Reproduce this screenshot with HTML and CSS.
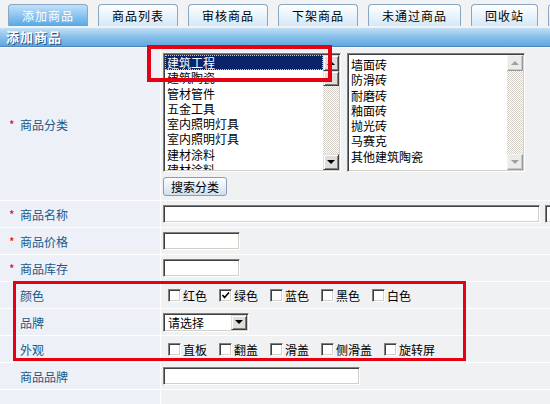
FILE: index.html
```html
<!DOCTYPE html>
<html lang="zh-CN">
<head>
    <meta charset="UTF-8">
    <meta name="viewport" content="width=device-width, initial-scale=1.0">
    <title>添加商品</title>
    <link rel="stylesheet" href="styles.css">
</head>
<body>
    <div class="tabs">
        <a href="#" class="tab active">添加商品</a>
        <a href="#" class="tab">商品列表</a>
        <a href="#" class="tab">审核商品</a>
        <a href="#" class="tab">下架商品</a>
        <a href="#" class="tab">未通过商品</a>
        <a href="#" class="tab">回收站</a>
        <span class="tab tab-edge"></span>
    </div>

    <div class="panel-title">添加商品</div>

    <table class="form">
        <colgroup>
            <col class="col-label">
            <col>
        </colgroup>
        <tr class="row-category">
            <td class="label"><span class="req">*</span>商品分类</td>
            <td class="field">
                <div class="lists">
                    <div class="listbox">
                        <ul class="options">
                            <li class="selected">建筑工程</li>
                            <li>建筑陶瓷</li>
                            <li>管材管件</li>
                            <li>五金工具</li>
                            <li>室内照明灯具</li>
                            <li>室内照明灯具</li>
                            <li>建材涂料</li>
                            <li>建材涂料</li>
                        </ul>
                        <div class="scrollbar">
                            <span class="sb-btn sb-up"></span>
                            <span class="sb-thumb"></span>
                            <span class="sb-track"></span>
                            <span class="sb-btn sb-down"></span>
                        </div>
                    </div>
                    <div class="listbox">
                        <ul class="options options-sub">
                            <li>墙面砖</li>
                            <li>防滑砖</li>
                            <li>耐磨砖</li>
                            <li>釉面砖</li>
                            <li>抛光砖</li>
                            <li>马赛克</li>
                            <li>其他建筑陶瓷</li>
                        </ul>
                        <div class="scrollbar disabled">
                            <span class="sb-btn sb-up"></span>
                            <span class="sb-track"></span>
                            <span class="sb-btn sb-down"></span>
                        </div>
                    </div>
                </div>
                <button type="button" class="btn">搜索分类</button>
            </td>
        </tr>
        <tr>
            <td class="label"><span class="req">*</span>商品名称</td>
            <td class="field">
                <div class="line">
                    <input type="text" class="text text-long">
                    <input type="text" class="text text-extra">
                </div>
            </td>
        </tr>
        <tr>
            <td class="label"><span class="req">*</span>商品价格</td>
            <td class="field"><div class="line"><input type="text" class="text text-short"></div></td>
        </tr>
        <tr>
            <td class="label"><span class="req">*</span>商品库存</td>
            <td class="field"><div class="line"><input type="text" class="text text-short"></div></td>
        </tr>
        <tr>
            <td class="label label-plain">颜色</td>
            <td class="field">
                <div class="line">
                    <label class="check"><span class="cb"></span>红色</label>
                    <label class="check"><span class="cb"><svg width="9" height="9" viewBox="0 0 9 9"><polyline points="1.5,4 3.5,6.5 8,1.5" fill="none" stroke="#000" stroke-width="1.6"/></svg></span>绿色</label>
                    <label class="check"><span class="cb"></span>蓝色</label>
                    <label class="check"><span class="cb"></span>黑色</label>
                    <label class="check"><span class="cb"></span>白色</label>
                </div>
            </td>
        </tr>
        <tr>
            <td class="label label-plain">品牌</td>
            <td class="field">
                <div class="line">
                    <div class="select">
                        <span class="select-value">请选择</span>
                        <span class="select-btn"></span>
                    </div>
                </div>
            </td>
        </tr>
        <tr>
            <td class="label label-plain">外观</td>
            <td class="field">
                <div class="line">
                    <label class="check"><span class="cb"></span>直板</label>
                    <label class="check"><span class="cb"></span>翻盖</label>
                    <label class="check"><span class="cb"></span>滑盖</label>
                    <label class="check"><span class="cb"></span>侧滑盖</label>
                    <label class="check"><span class="cb"></span>旋转屏</label>
                </div>
            </td>
        </tr>
        <tr>
            <td class="label label-plain">商品品牌</td>
            <td class="field"><div class="line"><input type="text" class="text text-mid"></div></td>
        </tr>
        <tr>
            <td class="label"></td>
            <td class="field"></td>
        </tr>
    </table>

    <!-- highlight boxes drawn over the form -->
    <div class="mark mark-category"></div>
    <div class="mark mark-attrs"></div>
</body>
</html>
```

FILE: styles.css
```css
* {
    margin: 0;
    padding: 0;
    box-sizing: border-box;
}

html, body {
    overflow: hidden;
}

body {
    position: relative;
    width: 550px;
    height: 404px;
    font-family: "Noto Sans CJK SC", "Noto Sans", sans-serif;
    font-size: 12px;
    color: #000;
    background: #eef0f3;
}

/* tabs */
.tabs {
    display: flex;
    gap: 10px;
    height: 28px;
    padding: 4px 0 0 8px;
    background: #f1f2f4;
    white-space: nowrap;
    overflow: hidden;
}

.tab {
    flex: none;
    height: 22px;
    line-height: 21px;
    padding: 0 13px;
    border: 1px solid #8aa6c4;
    border-bottom: none;
    border-radius: 4px 4px 0 0;
    background: linear-gradient(#ffffff, #d4e8f8);
    color: #000;
    text-decoration: none;
    letter-spacing: 1px;
}

.tab.active {
    background: linear-gradient(#c2e1f8, #55a8e6);
    color: #fff;
}

.tab-edge {
    width: 60px;
}

.panel-title {
    height: 19px;
    line-height: 18px;
    padding-left: 6px;
    font-size: 13px;
    font-weight: bold;
    letter-spacing: 1px;
    color: #fff;
    text-shadow: 1px 1px 0 #1f5485;
    background: linear-gradient(#c2dff5, #86bfea 50%, #60a8e2);
    border-bottom: 1px solid #4a86bd;
}

/* form table */
.form {
    width: 550px;
    table-layout: fixed;
    border-collapse: separate;
    border-spacing: 0;
}

.col-label {
    width: 161px;
}

.form td {
    height: 27px;
    border-top: 1px solid #fff;
    vertical-align: middle;
    white-space: nowrap;
}

.label {
    padding-left: 9px;
    color: #17598c;
    background: #edf0f6;
    border-right: 1px solid #fff;
}

.label-plain {
    padding-left: 20px;
}

.req {
    display: inline-block;
    width: 11px;
    color: #e00;
}

.field {
    padding-left: 2px;
    background: #f0f1f3;
}

.row-category td {
    padding-top: 5px;
    padding-bottom: 4px;
}

.line {
    display: flex;
    align-items: center;
}

/* list boxes */
.lists {
    display: flex;
    gap: 6px;
}

.listbox {
    display: flex;
    width: 178px;
    height: 119px;
    padding: 1px;
    background: #fff;
    border: 1px solid;
    border-color: #808080 #fff #fff #808080;
    box-shadow: inset 1px 1px #404040, inset -1px -1px #d4d0c8;
    overflow: hidden;
}

.options {
    flex: 1;
    list-style: none;
    overflow: hidden;
}

.options li {
    height: 15.3px;
    line-height: 15px;
    padding-left: 2px;
}

.options-sub {
    padding-top: 2px;
}

.options li.selected {
    background: #0a246a;
    color: #fff;
    outline: 1px dotted #c8c8c8;
    outline-offset: -1px;
}

.scrollbar {
    display: flex;
    flex-direction: column;
    width: 16px;
    background: repeating-conic-gradient(#fff 0 25%, #d4d0c8 0 50%) 0 0 / 2px 2px;
}

.sb-btn,
.sb-thumb,
.select-btn {
    flex: none;
    display: flex;
    align-items: center;
    justify-content: center;
    background: #e0deda;
    border: 1px solid;
    border-color: #e0deda #404040 #404040 #e0deda;
    box-shadow: inset 1px 1px #fff, inset -1px -1px #808080;
}

.sb-btn {
    height: 16px;
}

.sb-thumb {
    height: 15px;
}

.sb-track {
    flex: 1;
}

.sb-btn::before,
.select-btn::before {
    content: "";
    border-left: 4px solid transparent;
    border-right: 4px solid transparent;
}

.sb-up::before {
    border-bottom: 4px solid #000;
}

.sb-down::before,
.select-btn::before {
    border-top: 4px solid #000;
}

.scrollbar.disabled .sb-btn {
    background: #ebebeb;
    border-color: #f4f4f4 #9a9a9a #9a9a9a #f4f4f4;
    box-shadow: inset -1px -1px #c8c8c8;
}

.scrollbar.disabled .sb-up::before {
    border-bottom-color: #a0a0a0;
}

.scrollbar.disabled .sb-down::before {
    border-top-color: #a0a0a0;
}

.btn {
    display: block;
    width: 64px;
    height: 19px;
    margin-top: 5px;
    font: inherit;
    line-height: 17px;
    color: #000;
    background: linear-gradient(#fdfeff, #d2dfee);
    border: 1px solid #8b9db4;
    border-radius: 3px;
}

/* inputs */
.text {
    display: block;
    flex: none;
    height: 18px;
    background: #fff;
    border: 1px solid;
    border-color: #808080 #fff #fff #808080;
    box-shadow: inset 1px 1px #404040, inset -1px -1px #d4d0c8;
    font: inherit;
}

.text-long {
    width: 377px;
}

.text-extra {
    width: 100px;
    margin-left: 5px;
}

.text-short {
    width: 77px;
}

.text-mid {
    width: 197px;
}

.check {
    display: flex;
    align-items: center;
    margin-right: 7px;
}

.cb {
    display: flex;
    align-items: center;
    justify-content: center;
    width: 13px;
    height: 13px;
    margin: 0 2px 0 5px;
    background: #fff;
    border: 1px solid;
    border-color: #808080 #fff #fff #808080;
    box-shadow: inset 1px 1px #404040, inset -1px -1px #d4d0c8;
}

.select {
    display: flex;
    align-items: center;
    width: 86px;
    height: 19px;
    padding: 1px;
    background: #fff;
    border: 1px solid;
    border-color: #808080 #fff #fff #808080;
    box-shadow: inset 1px 1px #404040, inset -1px -1px #d4d0c8;
}

.select-value {
    flex: 1;
    padding-left: 3px;
    line-height: 15px;
}

.select-btn {
    width: 16px;
    height: 15px;
}

/* red annotation boxes */
.mark {
    position: absolute;
    border: 4px solid #e60012;
    pointer-events: none;
}

.mark-category {
    left: 147px;
    top: 45px;
    width: 185px;
    height: 37px;
}

.mark-attrs {
    left: 13px;
    top: 281px;
    width: 453px;
    height: 80px;
    border-width: 3px;
}
```
